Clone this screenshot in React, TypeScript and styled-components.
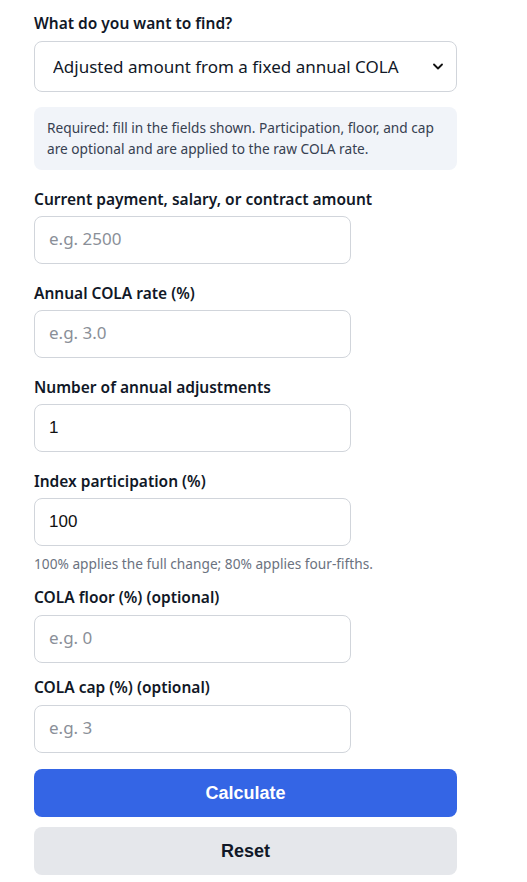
import { createGlobalStyle, styled } from "styled-components"

const GlobalStyle = createGlobalStyle`
  body {
    margin: 0;
    background: #ffffff;
    font-family: "Noto Sans", "Open Sans", sans-serif;
    color: #111827;
  }
`

type FieldType = {
    label: string
    placeholder?: string
    value?: string
    hint?: string
    optional?: boolean
}

const fields: FieldType[] = [
    { label: "Current payment, salary, or contract amount", placeholder: "e.g. 2500" },
    { label: "Annual COLA rate (%)", placeholder: "e.g. 3.0" },
    { label: "Number of annual adjustments", value: "1" },
    { label: "Index participation (%)", value: "100", hint: "100% applies the full change; 80% applies four-fifths." },
    { label: "COLA floor (%) (optional)", placeholder: "e.g. 0", optional: true },
    { label: "COLA cap (%) (optional)", placeholder: "e.g. 3", optional: true },
]

export default function App() {
    return (
        <>
            <GlobalStyle />
            <Form>
                <Label>What do you want to find?</Label>
                <SelectWrap>
                    <Select defaultValue="fixed">
                        <option value="fixed">Adjusted amount from a fixed annual COLA</option>
                    </Select>
                    <Chevron viewBox="0 0 10 6">
                        <path d="M1 1l4 4 4-4" fill="none" stroke="#111" strokeWidth="1.8" strokeLinecap="round" strokeLinejoin="round" />
                    </Chevron>
                </SelectWrap>

                <Note>
                    Required: fill in the fields shown. Participation, floor, and cap
                    are optional and are applied to the raw COLA rate.
                </Note>

                {fields.map(f => (
                    <Field key={f.label} $tight={f.optional}>
                        <Label>{f.label}</Label>
                        <Input placeholder={f.placeholder} defaultValue={f.value} $tight={f.optional} />
                        {f.hint && <Hint>{f.hint}</Hint>}
                    </Field>
                ))}

                <Actions>
                    <Button $primary>Calculate</Button>
                    <Button>Reset</Button>
                </Actions>
            </Form>
        </>
    )
}

const Form = styled.div`
  width: 423px;
  padding: 11px 0 0 34px;
  display: flex;
  flex-direction: column;
`

const Label = styled.label`
  display: block;
  font-size: 15.5px;
  font-weight: 600;
  line-height: 24px;
  color: #111827;
`

const SelectWrap = styled.div`
  position: relative;
  margin-top: 6px;
`

const Select = styled.select`
  appearance: none;
  width: 100%;
  height: 51px;
  box-sizing: border-box;
  border: 1px solid #d1d5db;
  border-radius: 8px;
  background: #fff;
  padding: 0 40px 0 18px;
  font-family: "Noto Sans", "Open Sans", sans-serif;
  font-size: 17px;
  color: #111827;
`

const Chevron = styled.svg`
  position: absolute;
  right: 14px;
  top: 22px;
  width: 10px;
  height: 7px;
  pointer-events: none;
`

const Note = styled.div`
  margin: 15px 0 17px;
  padding: 10px 13px 11px;
  background: #f1f4f9;
  border-radius: 8px;
  font-size: 13.7px;
  line-height: 21px;
  color: #374151;
`

type TightPropsType = {
    $tight?: boolean
}

const Field = styled.div<TightPropsType>`
  display: flex;
  flex-direction: column;
  margin-bottom: ${props => props.$tight ? "12px" : "17px"};
`

const Input = styled.input<TightPropsType>`
  margin-top: ${props => props.$tight ? "6px" : "5px"};
  width: 75%;
  height: 48px;
  box-sizing: border-box;
  border: 1px solid #d1d5db;
  border-radius: 8px;
  padding: 0 14px;
  font-family: "Liberation Sans", Arial, sans-serif;
  font-size: 17px;
  color: #111;
  outline: none;

  &::placeholder {
    font-family: "Noto Sans", "Open Sans", sans-serif;
    color: #8a8f98;
  }
`

const Hint = styled.div`
  margin: 8px 0 -6px;
  font-size: 13.7px;
  line-height: 20px;
  color: #6b7280;
`

const Actions = styled.div`
  display: flex;
  flex-direction: column;
  gap: 10px;
  margin-top: 4px;
`

type ButtonPropsType = {
    $primary?: boolean
}

const Button = styled.button<ButtonPropsType>`
  width: 100%;
  height: 48px;
  border: none;
  border-radius: 8px;
  background: ${props => props.$primary ? "#3465e5" : "#e5e7eb"};
  color: ${props => props.$primary ? "#ffffff" : "#111827"};
  font-family: "Liberation Sans", Arial, sans-serif;
  font-size: 18px;
  font-weight: 700;
`
